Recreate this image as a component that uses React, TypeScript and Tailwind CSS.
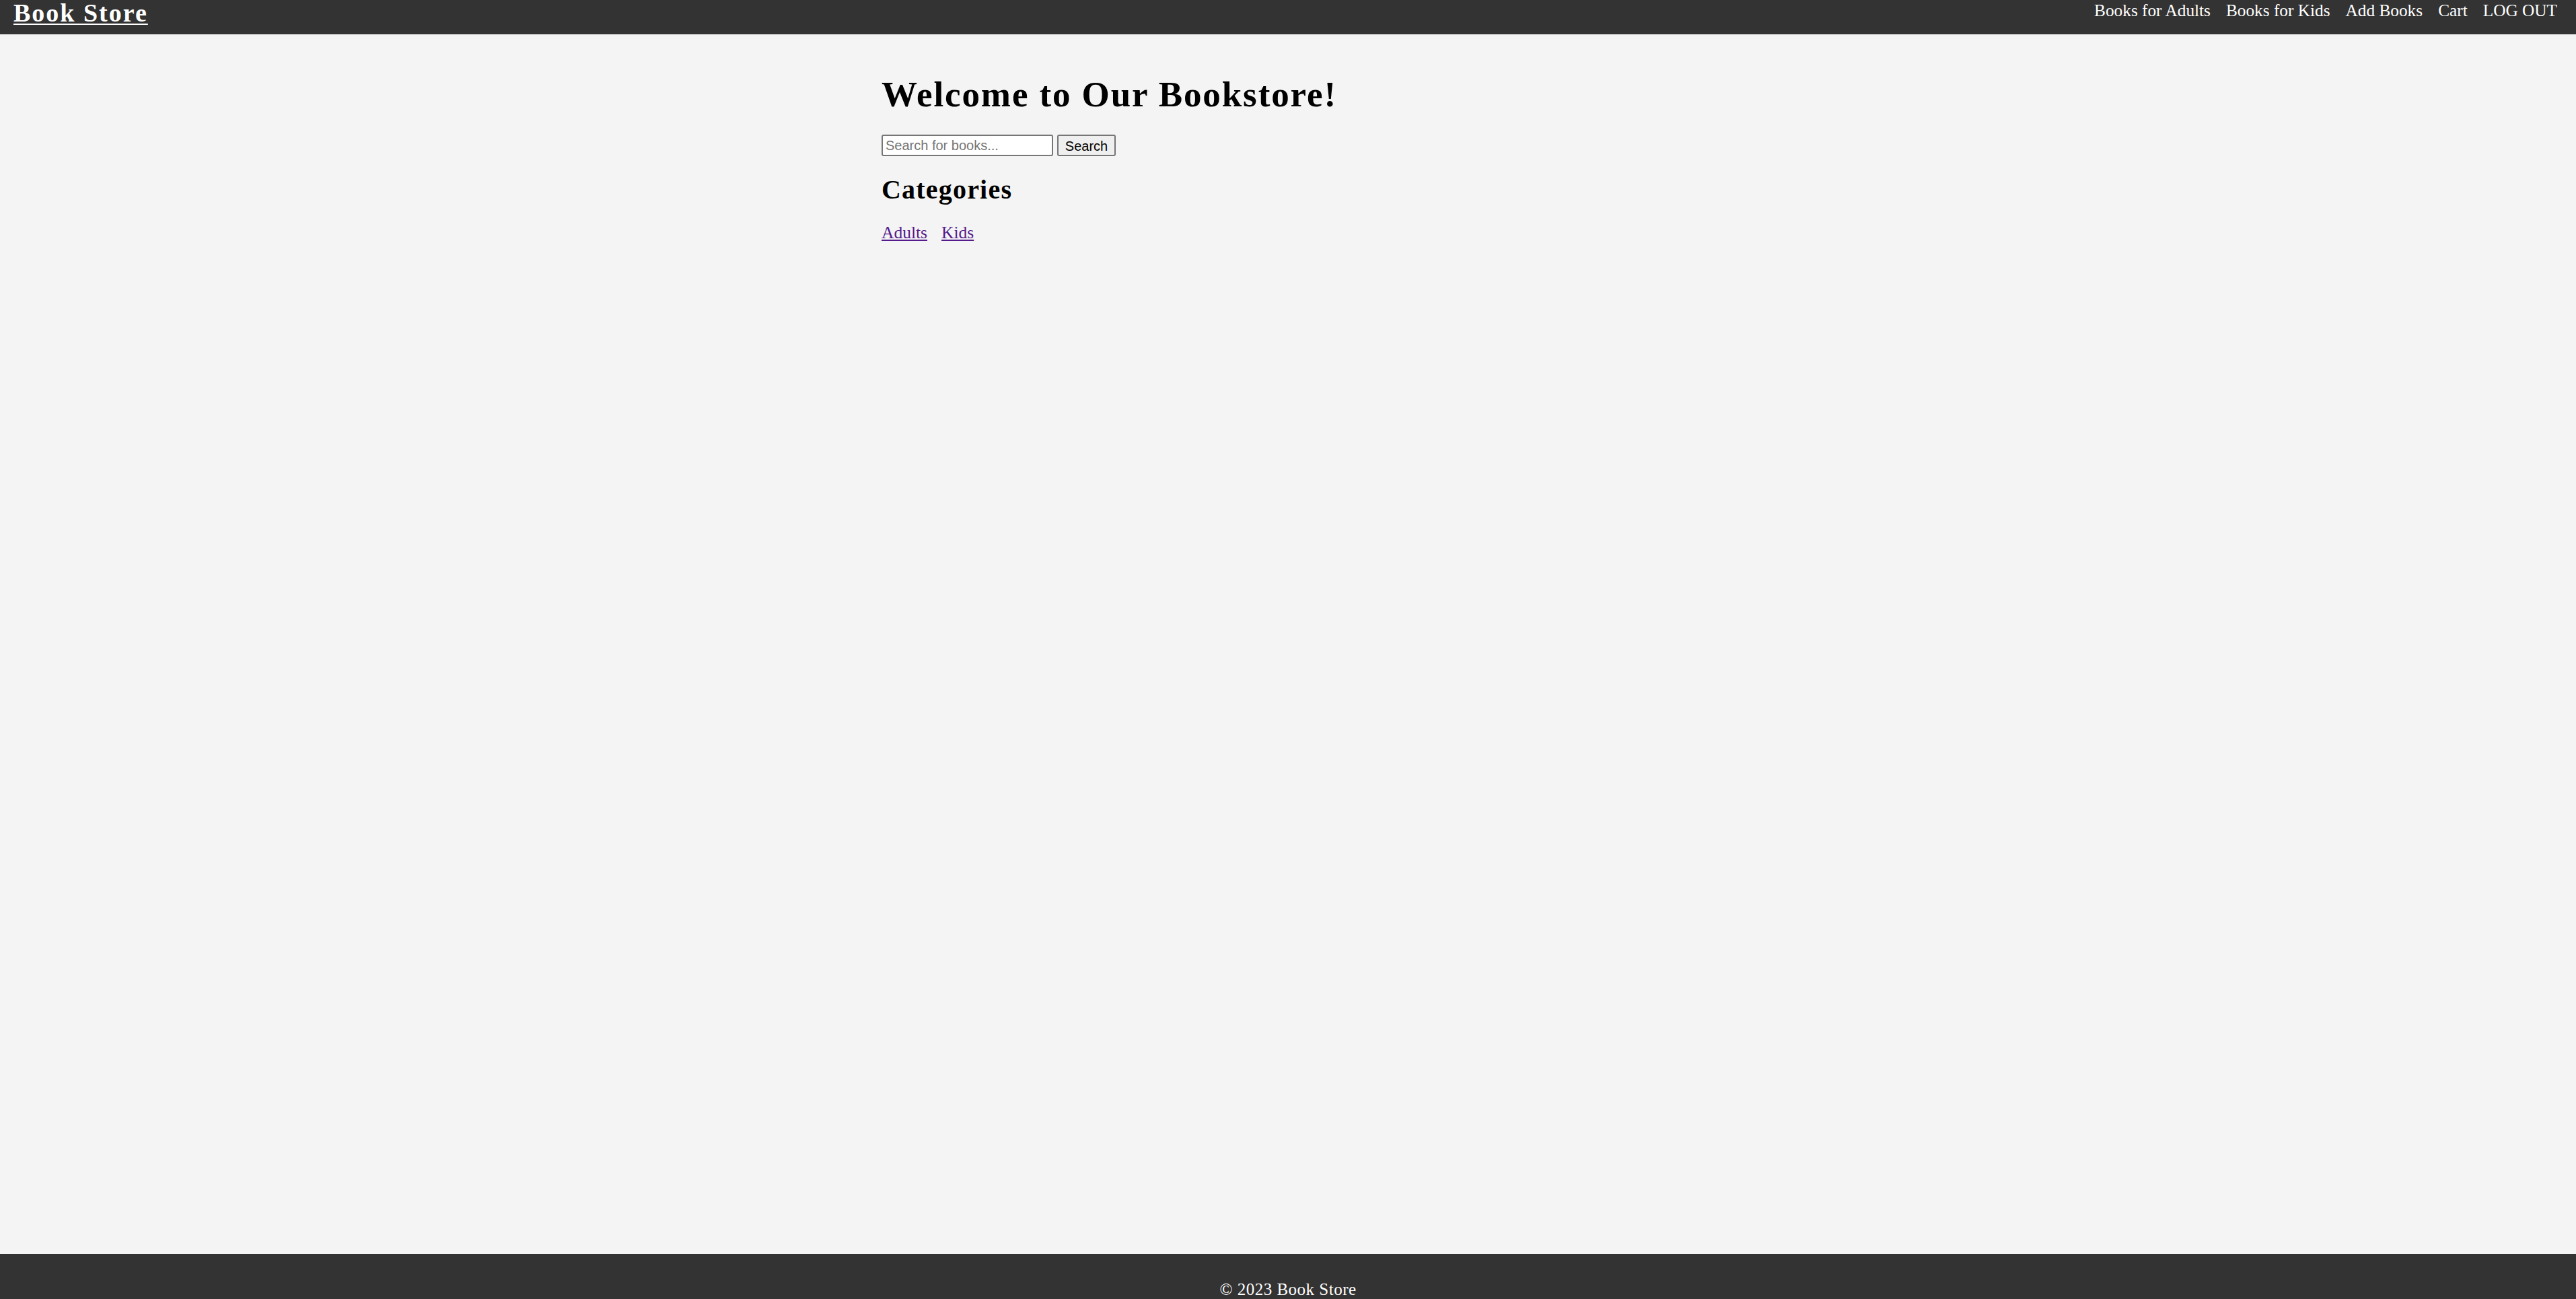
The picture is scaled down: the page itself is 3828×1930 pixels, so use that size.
import React from 'react'

const serif = "font-['Liberation_Serif','Times_New_Roman',serif]"

function Header() {
  return (
    <header className="flex h-[51px] items-start justify-between bg-[#333333] text-white">
      <a href="#" className="pl-[20px] text-[38px] font-bold leading-[38px] tracking-[2px] underline decoration-2 underline-offset-[3px]">
        Book Store
      </a>
      <nav className="flex gap-[23px] pr-[28px] pt-[3px] text-[25.3px] leading-none">
        <a href="#">Books for Adults</a>
        <a href="#">Books for Kids</a>
        <a href="#">Add Books</a>
        <a href="#">Cart</a>
        <a href="#">LOG OUT</a>
      </nav>
    </header>
  )
}

export default function App() {
  return (
    <div className={`flex h-[1930px] flex-col overflow-hidden bg-[#f4f4f4] ${serif}`}>
      <Header />

      <main className="flex-1">
        <div className="mx-auto w-[1208px] pt-[63px]">
          <h1 className="text-[53px] font-bold leading-none tracking-[1.9px] text-black">
            Welcome to Our Bookstore!
          </h1>

          <form className="mt-[33px] flex gap-[6px] font-['Liberation_Sans',Arial,sans-serif] text-[20px]">
            <input
              type="text"
              placeholder="Search for books..."
              className="h-[32px] w-[255px] rounded-[3px] border-2 border-[#767676] bg-white px-[4px] placeholder:text-[#757575]"
            />
            <button
              type="button"
              className="h-[32px] w-[87px] rounded-[3px] border-2 border-[#767676] bg-[#efefef] text-black"
            >
              Search
            </button>
          </form>

          <h2 className="mt-[30px] text-[40px] font-bold leading-none tracking-[1.2px] text-black">
            Categories
          </h2>

          <div className="mt-[31px] flex gap-[21px] text-[25.5px] leading-none text-[#551a8b]">
            <a href="#" className="underline">Adults</a>
            <a href="#" className="underline">Kids</a>
          </div>
        </div>
      </main>

      <footer className="h-[67px] bg-[#333333] pt-[40px] text-center text-[25px] leading-none tracking-[0.5px] text-white">
        © 2023 Book Store
      </footer>
    </div>
  )
}
